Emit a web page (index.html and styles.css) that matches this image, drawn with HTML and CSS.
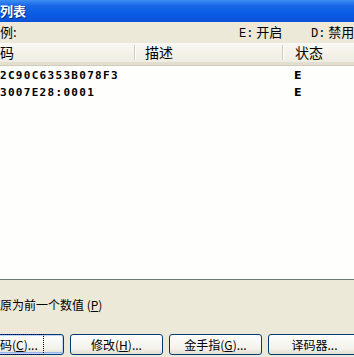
FILE: index.html
```html
<!DOCTYPE html>
<html lang="zh-CN">
<head>
    <meta charset="UTF-8">
    <title>列表</title>
    <link rel="stylesheet" href="styles.css">
</head>
<body>
    <div class="titlebar">列表</div>
    <div class="legend">
        <span class="legend-label">例:</span>
        <span class="legend-on"><span class="key">E:</span> 开启</span>
        <span class="legend-off"><span class="key">D:</span> 禁用</span>
    </div>
    <div class="list">
        <div class="list-header">
            <div class="col col-code">码</div>
            <div class="col col-desc">描述</div>
            <div class="col col-state">状态</div>
        </div>
        <div class="row">
            <div class="col col-code">2C90C6353B078F3</div>
            <div class="col col-desc"></div>
            <div class="col col-state">E</div>
        </div>
        <div class="row">
            <div class="col col-code">3007E28:0001</div>
            <div class="col col-desc"></div>
            <div class="col col-state">E</div>
        </div>
    </div>
    <div class="option">原为前一个数值 (<u>P</u>)</div>
    <div class="buttons">
        <button class="btn btn-default"><span class="focus">码(<u>C</u>)...</span></button>
        <button class="btn">修改(<u>H</u>)...</button>
        <button class="btn">金手指(<u>G</u>)...</button>
        <button class="btn">译码器...</button>
    </div>
</body>
</html>
```

FILE: styles.css
```css
body {
    margin: 0;
    width: 354px;
    height: 357px;
    overflow: hidden;
    background-color: #ece9d8;
    font-family: "Noto Sans CJK SC", "DejaVu Sans", sans-serif;
    font-size: 12px;
    color: #000;
}
.titlebar {
    height: 22px;
    line-height: 21px;
    background: linear-gradient(#3d8ef4 0%, #1a68e8 25%, #0a5ce6 60%, #0b52d6 100%);
    color: #fff;
    font-size: 13px;
    font-weight: bold;
    text-shadow: 1px 1px 0 #0a2a80;
}
.legend {
    position: relative;
    height: 21px;
    line-height: 19px;
    font-size: 13px;
    white-space: nowrap;
}
.legend-on {
    position: absolute;
    left: 239px;
}
.legend-off {
    position: absolute;
    left: 311px;
}
.key {
    font-family: "Liberation Mono", monospace;
    font-size: 12px;
}
.list {
    height: 236px;
    background-color: #fefefc;
    border-bottom: 1px solid #6e7a70;
}
.list-header {
    display: flex;
    height: 19px;
    line-height: 19px;
    font-size: 14px;
    background: linear-gradient(#f9f8f3, #efede2);
    border-bottom: 3px solid #e2ded0;
    box-shadow: 0 1px 0 #d0ccbc;
}
.list-header .col {
    border-right: 1px solid #cfccb8;
    box-shadow: 1px 0 0 #fff;
    height: 15px;
    margin-top: 2px;
    line-height: 15px;
}
.col {
    flex: none;
    box-sizing: border-box;
    padding-left: 10px;
}
.col-code {
    width: 135px;
}
.list-header .col-code {
    padding-left: 0;
}
.col-desc {
    width: 148px;
}
.col-state {
    flex: 1;
    padding-left: 12px;
}
.list-header .col-state {
    border-right: none;
    box-shadow: none;
}
.row {
    display: flex;
    height: 17px;
    line-height: 17px;
    font-family: "DejaVu Sans Mono", monospace;
    font-weight: bold;
    font-size: 11px;
    letter-spacing: 1.3px;
}
.list-header + .row {
    margin-top: 2px;
}
.row .col-code {
    padding-left: 0;
}
.row .col-state {
    padding-left: 11px;
    font-family: "DejaVu Sans", sans-serif;
}
.option {
    margin-top: 17px;
    height: 16px;
    line-height: 16px;
    white-space: nowrap;
}
.buttons {
    display: flex;
    gap: 6px;
    margin-top: 21px;
}
.btn {
    flex: none;
    width: 93px;
    height: 21px;
    padding: 0;
    font-family: "Noto Sans CJK SC", sans-serif;
    font-size: 12px;
    color: #000;
    background: linear-gradient(#fefefd, #f3f2ec 70%, #e3e0d2);
    border: 1px solid #003c74;
    border-radius: 3px;
    white-space: nowrap;
}
.btn-default {
    margin-left: -29px;
    padding-left: 28px;
    text-align: left;
    box-shadow: inset 0 0 0 1px #c2d3fc, inset 0 -1px 0 1px #98b8ea;
}
.focus {
    padding: 0 4px 0 0;
    outline: 1px dotted #000;
    outline-offset: 1px;
}
```
